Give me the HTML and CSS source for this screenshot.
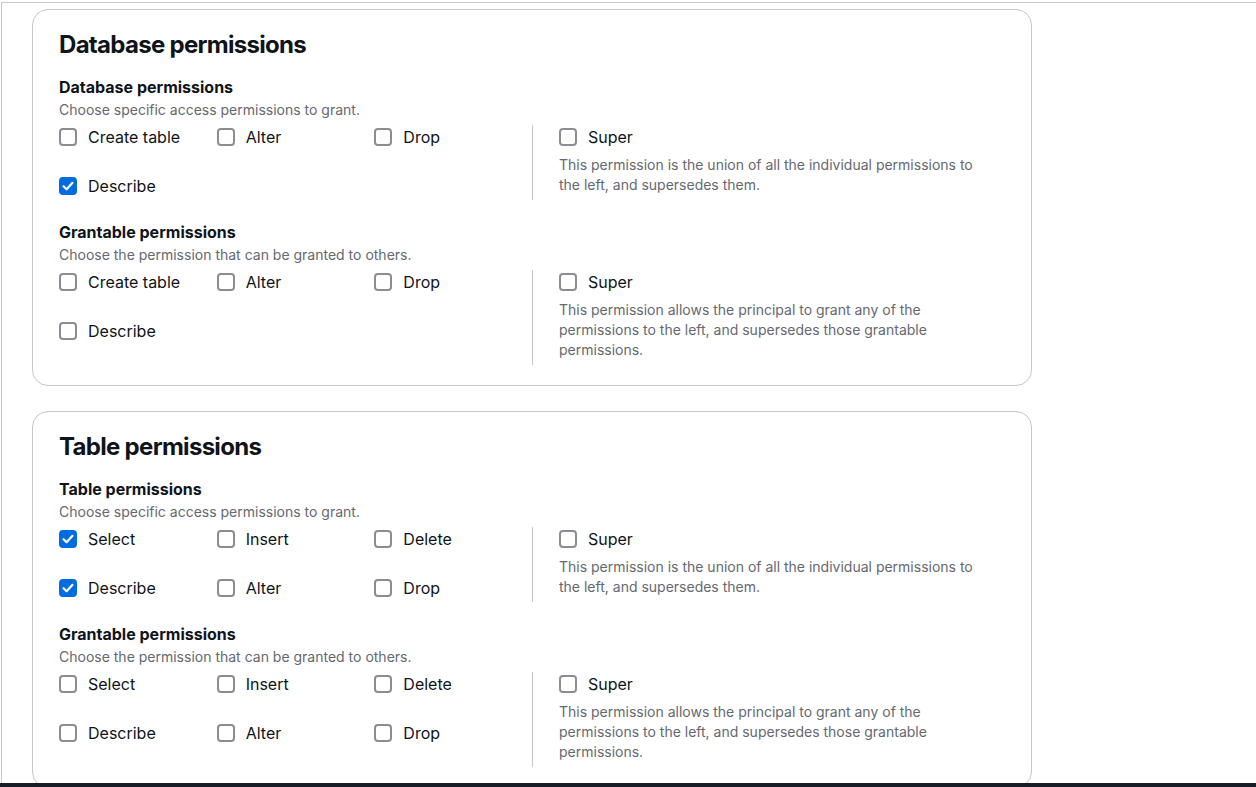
FILE: index.html
```html
<!DOCTYPE html>
<html lang="en">
<head>
<meta charset="utf-8">
<title>Permissions</title>
<link rel="stylesheet" href="styles.css">
</head>
<body>
<div class="frame">
  <section class="card">
    <h2 class="card-title">Database permissions</h2>
    <div class="group">
      <h3 class="group-title">Database permissions</h3>
      <p class="group-desc">Choose specific access permissions to grant.</p>
      <div class="perm-grid">
        <div class="perm-left">
          <label class="cb"><span class="box"></span><span class="lbl">Create table</span></label>
          <label class="cb"><span class="box"></span><span class="lbl">Alter</span></label>
          <label class="cb"><span class="box"></span><span class="lbl">Drop</span></label>
          <label class="cb"><span class="box checked"><svg viewBox="0 0 18 18"><path d="M4.5 9.2 L7.6 12.2 L13.5 5.8"/></svg></span><span class="lbl">Describe</span></label>
        </div>
        <div class="perm-right">
          <label class="cb"><span class="box"></span><span class="lbl">Super</span></label>
          <p class="super-desc">This permission is the union of all the individual permissions to the left, and supersedes them.</p>
        </div>
      </div>
    </div>
    <div class="group">
      <h3 class="group-title">Grantable permissions</h3>
      <p class="group-desc">Choose the permission that can be granted to others.</p>
      <div class="perm-grid">
        <div class="perm-left">
          <label class="cb"><span class="box"></span><span class="lbl">Create table</span></label>
          <label class="cb"><span class="box"></span><span class="lbl">Alter</span></label>
          <label class="cb"><span class="box"></span><span class="lbl">Drop</span></label>
          <label class="cb"><span class="box"></span><span class="lbl">Describe</span></label>
        </div>
        <div class="perm-right">
          <label class="cb"><span class="box"></span><span class="lbl">Super</span></label>
          <p class="super-desc">This permission allows the principal to grant any of the permissions to the left, and supersedes those grantable permissions.</p>
        </div>
      </div>
    </div>
  </section>

  <section class="card">
    <h2 class="card-title">Table permissions</h2>
    <div class="group">
      <h3 class="group-title">Table permissions</h3>
      <p class="group-desc">Choose specific access permissions to grant.</p>
      <div class="perm-grid">
        <div class="perm-left">
          <label class="cb"><span class="box checked"><svg viewBox="0 0 18 18"><path d="M4.5 9.2 L7.6 12.2 L13.5 5.8"/></svg></span><span class="lbl">Select</span></label>
          <label class="cb"><span class="box"></span><span class="lbl">Insert</span></label>
          <label class="cb"><span class="box"></span><span class="lbl">Delete</span></label>
          <label class="cb"><span class="box checked"><svg viewBox="0 0 18 18"><path d="M4.5 9.2 L7.6 12.2 L13.5 5.8"/></svg></span><span class="lbl">Describe</span></label>
          <label class="cb"><span class="box"></span><span class="lbl">Alter</span></label>
          <label class="cb"><span class="box"></span><span class="lbl">Drop</span></label>
        </div>
        <div class="perm-right">
          <label class="cb"><span class="box"></span><span class="lbl">Super</span></label>
          <p class="super-desc">This permission is the union of all the individual permissions to the left, and supersedes them.</p>
        </div>
      </div>
    </div>
    <div class="group">
      <h3 class="group-title">Grantable permissions</h3>
      <p class="group-desc">Choose the permission that can be granted to others.</p>
      <div class="perm-grid">
        <div class="perm-left">
          <label class="cb"><span class="box"></span><span class="lbl">Select</span></label>
          <label class="cb"><span class="box"></span><span class="lbl">Insert</span></label>
          <label class="cb"><span class="box"></span><span class="lbl">Delete</span></label>
          <label class="cb"><span class="box"></span><span class="lbl">Describe</span></label>
          <label class="cb"><span class="box"></span><span class="lbl">Alter</span></label>
          <label class="cb"><span class="box"></span><span class="lbl">Drop</span></label>
        </div>
        <div class="perm-right">
          <label class="cb"><span class="box"></span><span class="lbl">Super</span></label>
          <p class="super-desc">This permission allows the principal to grant any of the permissions to the left, and supersedes those grantable permissions.</p>
        </div>
      </div>
    </div>
  </section>
</div>
<div class="bottom-bar"></div>
</body>
</html>
```
FILE: styles.css
```css
* { box-sizing: border-box; }

html, body {
  margin: 0;
  padding: 0;
  background: #ffffff;
  height: 100%;
  overflow: hidden;
}

body {
  font-family: Inter, Roboto, "Liberation Sans", Arial, sans-serif;
  color: #0f141a;
}

.frame {
  margin: 2px 0 0 1px;
  border-top: 1px solid #c6c6cd;
  border-left: 1px solid #c6c6cd;
  padding: 6px 0 0 30px;
  height: 785px;
  display: flex;
  flex-direction: column;
  gap: 25px;
}

.card {
  width: 1000px;
  border: 1px solid #c6c6cd;
  border-radius: 16px;
  padding: 20px 26px 20px 26px;
  flex-shrink: 0;
}

.card-title {
  margin: 0;
  font-size: 24px;
  line-height: 30px;
  font-weight: 700;
  letter-spacing: -0.7px;
}

.group { margin-top: 16px; }
.group + .group { margin-top: 21px; }

.group-title {
  margin: 0;
  font-size: 16px;
  line-height: 22px;
  font-weight: 700;
}

.group-desc {
  margin: 2px 0 0;
  font-size: 14px;
  line-height: 20px;
  color: #656871;
}

.perm-grid {
  margin-top: 5px;
  display: grid;
  grid-template-columns: 1fr 1fr;
}

.perm-left {
  display: grid;
  grid-template-columns: repeat(3, 1fr);
  row-gap: 25px;
  align-content: start;
}

.perm-right {
  border-left: 1px solid #c6c6cd;
  padding: 0 0 5px 26px;
}

.cb {
  display: flex;
  align-items: center;
  gap: 11px;
  height: 24px;
  font-size: 16px;
  line-height: 22px;
}

.box {
  width: 18px;
  height: 18px;
  border: 2px solid #8c8c94;
  border-radius: 4px;
  flex-shrink: 0;
  display: flex;
  align-items: center;
  justify-content: center;
}

.box.checked {
  background: #006ce0;
  border-color: #006ce0;
}

.box svg {
  width: 18px;
  height: 18px;
  flex-shrink: 0;
}

.box svg path {
  fill: none;
  stroke: #ffffff;
  stroke-width: 2.2;
  stroke-linecap: round;
  stroke-linejoin: round;
}

.super-desc {
  margin: 6px 0 0;
  max-width: 436px;
  font-size: 14px;
  line-height: 20px;
  color: #656871;
}

.bottom-bar {
  position: fixed;
  left: 0;
  right: 0;
  bottom: 0;
  height: 4px;
  background: #161d26;
}
```
